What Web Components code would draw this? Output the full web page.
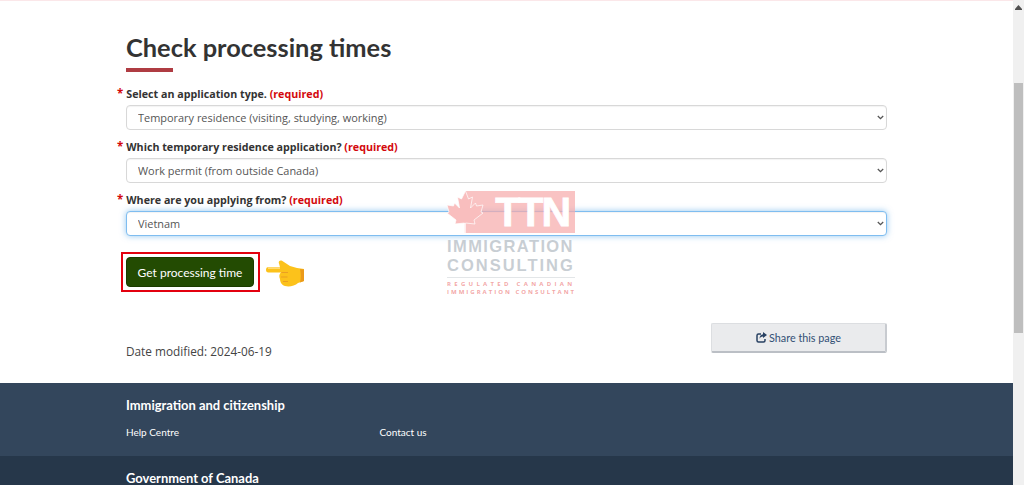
<!DOCTYPE html>
<html><head><meta charset="utf-8"><style>
html,body{margin:0;height:485px;overflow:hidden;background:#fff}
body{display:flex;font-family:"Open Sans",sans-serif}
app-page{flex:1;min-width:0}
</style></head><body>
<app-page>
  <page-title>Check processing times</page-title>
  <form-field label="Select an application type." value="Temporary residence (visiting, studying, working)"></form-field>
  <form-field label="Which temporary residence application?" value="Work permit (from outside Canada)"></form-field>
  <form-field label="Where are you applying from?" value="Vietnam" focused></form-field>
  <submit-row>Get processing time</submit-row>
  <meta-row>Date modified: 2024-06-19</meta-row>
  <site-footer></site-footer>
  <ttn-mark></ttn-mark>
</app-page>
<fake-scrollbar></fake-scrollbar>
<script>
function def(name,html){customElements.define(name,class extends HTMLElement{connectedCallback(){if(this.shadowRoot)return;const s=this.attachShadow({mode:'open'});s.innerHTML=typeof html==='function'?html(this):html;}});}
def('app-page',`<style>:host{display:block;border-top:1px solid #fbe7e9;height:484px;overflow:hidden;position:relative}</style><slot></slot>`);
def('page-title',`<style>:host{display:block;padding:31px 0 0 126px}
h1{margin:0;font:700 25.4px/30px Lato,sans-serif;color:#333;position:relative;height:40px}
h1::after{content:"";position:absolute;left:0;top:36px;width:47px;height:4px;background:#af3c43}</style><h1><slot></slot></h1>`);
def('form-field',h=>{const f=h.hasAttribute('focused');return `<style>:host{display:block;padding:0 126px 0 117px;margin-top:${h.getAttribute('label').startsWith('Select')?'14px':'9px'}}
label{display:block;font:700 10.7px/16px "Open Sans",sans-serif;color:#333;margin-bottom:3px;white-space:nowrap}
.a{color:#d3080c;margin-right:3px;font-size:11.5px}.r{color:#d3080c}
.w{position:relative;margin-left:9px;width:761px}
select{display:block;appearance:none;-webkit-appearance:none;width:100%;height:25px;box-sizing:border-box;border:1px solid ${f?'#7fbdf0':'#d8d8d8'};border-radius:4px;background:#fff;color:#555;font:10.95px "Open Sans",sans-serif;padding:0 11px;outline:0;${f?'box-shadow:inset 0 1px 1px rgba(0,0,0,.05),0 0 6px rgba(102,175,233,.7);':'box-shadow:inset 0 1px 1px rgba(0,0,0,.05);'}}
svg{position:absolute;right:3px;top:10px;pointer-events:none}</style>
<label><span class="a">*</span>${h.getAttribute('label')} <span class="r">(required)</span></label><div class="w"><select><option>${h.getAttribute('value')}</option></select><svg width="7" height="5" viewBox="0 0 7 5"><path d="M.8 1l2.700 2.700L6.200 1" fill="none" stroke="#555" stroke-width="1.300"/></svg></div>`});
def('submit-row',`<style>:host{display:flex;align-items:flex-start;margin:16px 0 0 121px;gap:5px}
.box{border:2px solid #e3000f;padding:3px 4px 3px 3px;display:flex;box-sizing:border-box;width:139px;height:40px}
button{flex:1;background:#234b02;border:1px solid #1b3b00;border-radius:4px;color:#fff;font:12px Lato,"Open Sans",sans-serif;padding:0}
svg{display:block;margin-top:8px}</style>
<div class="box"><button><slot></slot></button></div>
<svg width="40" height="28" viewBox="0 0 40 28"><path d="M2.500 7.200H15L14 3.500C13 1.500 15-.2 17 .8L25 6l7 2 7 1v12l-6 2c-3 3-9 4-13 3-4-1-5-5-5-7-1-2-1-5 1-6.500H3.500C1.500 12.500 1 11 1 10c0-1.500.5-2.500 1.500-2.800z" fill="#fcc21b"/><path d="M35 9l4 .5v11.500l-4 1.500c1-4 1-9 0-13.500z" fill="#eb9a1a"/><path d="M16.500 12.500H23M16 17h6.500M18 21.500h5" stroke="#ea9f23" stroke-width="1" fill="none"/><path d="M3 8.200h12" stroke="#ffe08a" stroke-width="1.200"/></svg>`);
def('meta-row',`<style>:host{display:flex;justify-content:space-between;align-items:flex-start;padding:0 126px;margin-top:31px;height:60px}
.d{font:11.8px/16px "Open Sans",sans-serif;color:#444;margin-top:20px}
.b{width:176px;height:30px;box-sizing:border-box;background:#eaebed;border:1px solid #dcdee1;border-bottom:2px solid #bbbfc5;border-right:2px solid #c8cbd0;border-radius:2px;display:flex;align-items:center;justify-content:center;gap:2px;color:#335075;font:10.8px Lato,sans-serif}
svg{display:block}</style>
<div class="d"><slot></slot></div><div class="b"><svg width="11" height="11" viewBox="0 0 11 11"><path d="M5 2H2.500A1.500 1.500 0 0 0 1 3.500v5A1.500 1.500 0 0 0 2.500 10h5A1.500 1.500 0 0 0 9 8.500V7" fill="none" stroke="#284162" stroke-width="1.500"/><path d="M7 0l4 3-4 3V4.500C5 4.500 4 5.500 3.500 7c0-3 1.500-4.500 3.500-4.700z" fill="#284162"/></svg>Share this page</div>`);
def('site-footer',`<style>:host{display:block;font-family:Lato,sans-serif;color:#fff}
.m{background:#33465c;height:73px;padding:14px 0 0 126px;box-sizing:border-box}
.s{background:#26374a;height:40px;padding:14px 0 0 126px;box-sizing:border-box}
h2{margin:0;font:700 12.950px/17px Lato,sans-serif}
.l{display:flex;margin-top:11px;font:10px/14px Lato,sans-serif}.l span{width:253.500px}</style>
<div class="m"><h2>Immigration and citizenship</h2><div class="l"><span>Help Centre</span><span>Contact us</span></div></div>
<div class="s"><h2>Government of Canada</h2></div>`);
def('ttn-mark',`<style>:host{position:absolute;left:447px;top:190px;width:130px;height:106px;pointer-events:none;display:block}
.ttn{position:absolute;left:18px;top:0;width:110px;height:42px;background:rgba(246,170,170,.7);color:#fff;-webkit-text-stroke:.8px #fff;font:700 41px/42px "Liberation Sans",sans-serif;letter-spacing:-2px;text-align:right;padding-right:6px;box-sizing:border-box}
svg{position:absolute;left:0;top:0}
.g{position:absolute;left:0;font:700 16.500px/14px "Liberation Sans",sans-serif;color:rgba(190,197,204,.85);white-space:nowrap}
.p{position:absolute;left:0;font:700 6px/6px "Open Sans",sans-serif;color:rgba(240,150,150,.85);white-space:nowrap}
.hr{position:absolute;left:0;right:2px;top:86px;height:1px;background:rgba(200,205,210,.5)}</style>
<div class="ttn">TTN</div>
<svg width="38" height="42" viewBox="0 0 38 42"><path d="M18.500 0l-4 8-4-2 2 11-5-5-1 3-6.500-1 2 7-2 1 9 7-1 4 9.500-1v11h1V32l9.500 1-1-4 9-7-2-1 2-7-6.500 1-1-3-5 5 2-11-4 2z" fill="rgb(249,190,190)" stroke="#fff" stroke-width=".7"/></svg>
<div class="g" style="top:47.500px;letter-spacing:1.400px">IMMIGRATION</div>
<div class="g" style="top:66.500px;letter-spacing:2px">CONSULTING</div>
<div class="hr"></div>
<div class="p" style="top:90px;letter-spacing:3.300px">REGULATED CANADIAN</div>
<div class="p" style="top:98px;letter-spacing:2px">IMMIGRATION CONSULTANT</div>`);
def('fake-scrollbar',`<style>:host{display:block;width:11px;flex:none;background:#f0f0f0;position:relative}
.t{height:250px;background:#bebebe;position:absolute;left:1px;right:1px;top:83px}
svg{position:absolute;left:2px;top:5px}</style><svg width="7" height="5" viewBox="0 0 7 5"><path d="M3.500 0L7 4H0z" fill="#505050"/><path d="M0 4h7v1H0z" fill="#505050"/></svg><div class="t"></div>`);
</script>
</body></html>
